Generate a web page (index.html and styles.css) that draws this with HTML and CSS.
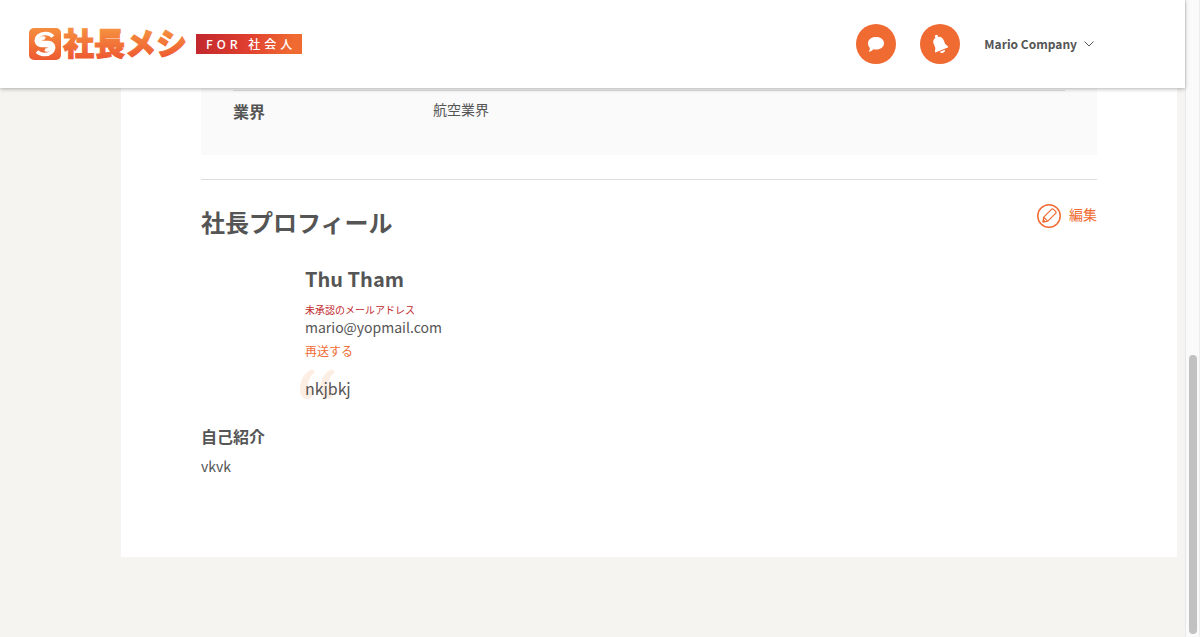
FILE: index.html
```html
<!DOCTYPE html>
<html lang="ja">
<head>
<meta charset="utf-8">
<meta name="viewport" content="width=device-width, initial-scale=1">
<title>社長メシ</title>
<link rel="stylesheet" href="styles.css">
</head>
<body>
<div class="page">
  <header class="header">
    <a class="logo" href="#">
      <svg class="logo-mark" viewBox="0 0 32 32" aria-hidden="true">
        <defs><linearGradient id="mark" x1="0" y1="0" x2="0" y2="1"><stop offset="0" stop-color="#f58e3e"/><stop offset="1" stop-color="#ee5a31"/></linearGradient></defs>
        <rect width="32" height="32" rx="5" fill="url(#mark)"/>
        <g fill="none" stroke="#fff" stroke-width="3.600">
          <path d="M24 8.500C20.500 4.800 13.500 4.300 9.500 7.800C5.500 11.800 7.500 17.300 13 17.500C18 17.300 21 17 21.200 19.500C21.200 22 18 22.500 16 21.500"/>
          <path d="M8 23.500C11.500 27.200 18.500 27.700 22.500 24.200C26.500 20.200 24.500 14.700 19 14.500C14 14.700 11 15 10.800 12.500C10.800 10 14 9.500 16 10.500"/>
        </g>
      </svg>
      <svg class="logo-name" viewBox="0 0 128 48" role="img" aria-label="社長メシ">
        <defs><linearGradient id="name" gradientUnits="userSpaceOnUse" x1="0" y1="10" x2="0" y2="38"><stop offset="0" stop-color="#f58e3e"/><stop offset="1" stop-color="#ee5a31"/></linearGradient></defs>
        <text x="1" y="35" fill="url(#name)" stroke="url(#name)">社長メシ</text>
      </svg>
      <span class="logo-tag">FOR 社会人</span>
    </a>
    <nav class="nav">
      <button class="round" type="button" aria-label="メッセージ">
        <svg viewBox="0 0 40 40"><path fill="#fff" d="M20 13c4.800 0 8 2.600 8 6.200s-3.200 6.300-8 6.300c-1 0-1.800-.1-2.600-.3-1.300 1.500-2.800 2.400-4.700 2.500 .9-1.200 1.200-2.400 1.100-3.900C12.600 22.700 12 21 12 19.200 12 15.600 15.200 13 20 13z"/></svg>
      </button>
      <button class="round" type="button" aria-label="お知らせ">
        <svg viewBox="0 0 40 40"><g fill="#fff" transform="rotate(-22 20 20)"><circle cx="19.500" cy="11.600" r="1.600"/><path d="M19.500 12.500c-3.600 0-5.300 2-5.300 5.200v4.300l-1.700 3v1.200h14V25l-1.700-3v-4.300c0-3.200-1.700-5.200-5.300-5.200z"/><path d="M17 27.200h5.400a2.700 2 0 0 1-5.400 0z"/></g></svg>
      </button>
      <button class="account" type="button">Mario Company
        <svg class="chevron" viewBox="0 0 10 6"><path d="M.5.500 5 5 9.500.500" fill="none" stroke="#555" stroke-width="1"/></svg>
      </button>
    </nav>
  </header>
  <main class="card">
    <section class="company">
      <dl class="row"><dt>業界</dt><dd>航空業界</dd></dl>
    </section>
    <section class="profile">
      <div class="profile-head">
        <h2>社長プロフィール</h2>
        <a class="edit" href="#">
          <svg viewBox="0 0 24 24" aria-hidden="true"><g fill="none" stroke="#f06b32"><circle cx="12" cy="12" r="11.200" stroke-width="1.500"/><path d="M6 18l.7-4.900 7.800-7.800q1-1 2 0l2.100 2.100q1 1 0 2l-7.800 7.800zM6.700 13.100l4.200 4.200" stroke-width="1.200" stroke-linejoin="round"/><path d="M6 18l.4-2.500 2.100 2.100z" fill="#f06b32"/></g></svg>
          編集
        </a>
      </div>
      <div class="person">
        <h3>Thu Tham</h3>
        <p class="notice">未承認のメールアドレス</p>
        <p class="mail">mario@yopmail.com</p>
        <a class="resend" href="#">再送する</a>
        <blockquote class="motto">
          <svg class="quote" viewBox="0 0 36 30" aria-hidden="true"><path id="mark-shape" fill="#fdeee4" d="M12 0C4 4 0 11 0 20C0 26.500 2.500 30 7 30C11 30 13.500 27.500 13.500 23.500C13.500 19.800 11 17.300 8 17C8 11 10.500 7 15 3z"/><use href="#mark-shape" x="20"/></svg>
          <span>nkjbkj</span>
        </blockquote>
      </div>
      <h4>自己紹介</h4>
      <p class="intro">vkvk</p>
    </section>
  </main>
</div>
<div class="scroll-track" aria-hidden="true"><div class="scroll-thumb"></div></div>
</body>
</html>
```

FILE: styles.css
```css
* { box-sizing: border-box; }
body {
  margin: 0;
  min-height: 100vh;
  display: flex;
  background: #f5f4f0;
  color: #555;
  font-family: "Noto Sans CJK JP", sans-serif;
  font-size: 14px;
  line-height: 20px;
}
h2, h3, h4, p, dl, dd, blockquote { margin: 0; }
a { text-decoration: none; }
button { font: inherit; color: inherit; border: 0; padding: 0; background: none; cursor: pointer; }
svg { display: block; }
.page { flex: 1; min-width: 0; }
.header {
  position: relative;
  z-index: 1;
  height: 88px;
  padding: 0 91px 0 29px;
  display: flex;
  align-items: center;
  justify-content: space-between;
  background: #fff;
  box-shadow: 0 1px 4px rgba(0, 0, 0, .3);
}
.logo { display: flex; align-items: center; }
.logo-mark { width: 32px; height: 32px; }
.logo-name {
  width: 128px;
  height: 48px;
  margin: 0 6px 0 1px;
  overflow: visible;
  font-size: 31px;
  font-weight: 900;
  stroke-width: 1px;
}
.logo-tag {
  padding: 0 6px 0 10px;
  font-size: 12px;
  line-height: 20px;
  font-weight: 500;
  letter-spacing: 4px;
  color: #fff;
  background: linear-gradient(100deg, #c1272d, #e0402f 50%, #f06b32 90%);
}
.nav { display: flex; align-items: center; gap: 24px; }
.round { width: 40px; height: 40px; border-radius: 50%; background: #f06b32; }
.account { display: flex; align-items: center; gap: 7px; font-size: 12px; font-weight: 700; }
.chevron { width: 10px; height: 6px; }
.card { margin: 0 8px 80px 121px; padding: 0 80px 81px; background: #fff; }
.company { padding: 2px 32px 32px; background: #fafafa; }
.row { display: grid; grid-template-columns: 200px 1fr; padding-top: 8px; border-top: 1px solid #ddd; }
.row dt { font-size: 16px; line-height: 24px; font-weight: 700; }
.profile { margin-top: 24px; padding-top: 24px; border-top: 1px solid #ddd; }
.profile-head { display: flex; justify-content: space-between; align-items: flex-start; }
h2 { font-size: 24px; line-height: 36px; }
.edit { display: flex; align-items: flex-start; gap: 8px; color: #f06b32; }
.edit svg { width: 24px; height: 24px; }
.person { margin: 24px 0 24px 104px; }
h3 { font-size: 20px; line-height: 30px; }
.notice { margin-top: 8px; font-size: 10px; line-height: 15px; color: #c1272d; }
.resend { display: block; margin-top: 4px; font-size: 12px; color: #f06b32; }
.motto { position: relative; margin-top: 15px; font-size: 16px; line-height: 24px; }
.motto span { position: relative; }
.quote { position: absolute; left: -5px; top: -7px; width: 36px; height: 30px; }
h4 { font-size: 16px; line-height: 24px; }
.intro { margin-top: 8px; }
.scroll-track {
  width: 15px;
  height: 100vh;
  padding: 0 2px 3px 3px;
  display: flex;
  flex-direction: column;
  justify-content: flex-end;
  background: #fafafa;
  border-left: 1px solid #e8e8e8;
  border-right: 1px solid #ededed;
}
.scroll-thumb { height: 44%; border-radius: 4px; background: #c1c1c1; }
```
